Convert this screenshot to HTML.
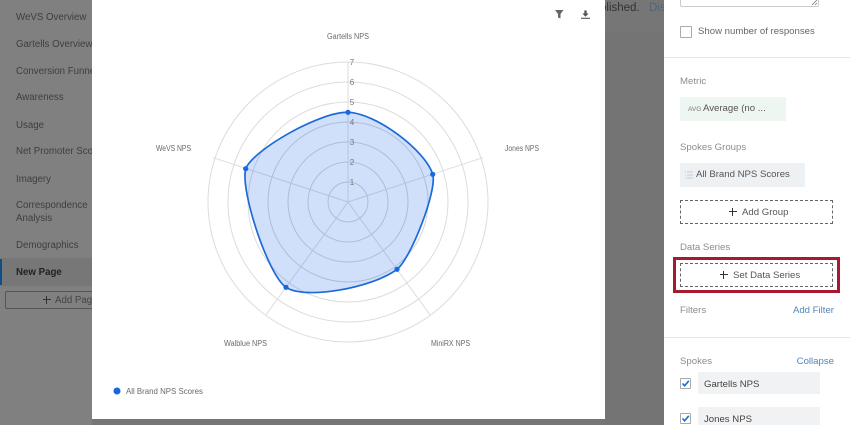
<!DOCTYPE html>
<html>
<head>
<meta charset="utf-8">
<style>
html,body{margin:0;padding:0;width:850px;height:425px;overflow:hidden;background:#767676;font-family:"Liberation Sans",sans-serif}
.a{position:absolute;white-space:nowrap}
#side{position:absolute;left:0;top:0;width:92px;height:425px;background:#808080;overflow:hidden}
#side .a{left:16px;font-size:9.7px;line-height:14px;color:#3e3e3e}
#panel{position:absolute;left:664px;top:0;width:186px;height:425px;background:#fff;overflow:hidden}
.l{position:absolute;white-space:nowrap;font-size:9.6px;line-height:14px;color:#8c8c8c}
.d{position:absolute;white-space:nowrap;font-size:9.6px;line-height:14px;color:#555}
.b{position:absolute;white-space:nowrap;font-size:9.6px;line-height:14px;color:#4f86b8}
.dash{position:absolute;left:16px;width:151px;height:22px;border:1px dashed #666;box-sizing:content-box}
.hr{position:absolute;left:0;width:186px;height:1px;background:#e6e6e6}
.cb{position:absolute;left:16px;width:9px;height:9px;border:1px solid #aaa;border-radius:1px;background:#fff}
.in{position:absolute;left:34px;width:122px;height:22px;background:#f1f2f4}
.p{position:absolute;width:8px;height:8px;background:linear-gradient(#333,#333) center/8px 1.2px no-repeat,linear-gradient(#333,#333) center/1.2px 8px no-repeat}
</style>
</head>
<body>
<div class="a" style="left:600px;top:1px;font-size:11.5px;line-height:14px;color:#333">olished.</div>
<div class="a" style="left:649px;top:1px;font-size:11.5px;line-height:14px;color:#4f6577">Dis</div>
<div style="position:absolute;left:605px;top:31px;width:59px;height:394px;background:#747474"></div>

<div id="side">
<div class="a" style="top:11px">WeVS Overview</div>
<div class="a" style="top:38px">Gartells Overview</div>
<div class="a" style="top:65px">Conversion Funnel</div>
<div class="a" style="top:91px">Awareness</div>
<div class="a" style="top:119px">Usage</div>
<div class="a" style="top:145px">Net Promoter Score</div>
<div class="a" style="top:173px">Imagery</div>
<div class="a" style="top:199px">Correspondence</div>
<div class="a" style="top:212px">Analysis</div>
<div class="a" style="top:239px">Demographics</div>
<div style="position:absolute;left:0;top:258px;width:92px;height:28px;background:#777"></div>
<div style="position:absolute;left:0;top:259px;width:2px;height:26px;background:#0f4f86"></div>
<div class="a" style="top:266px;font-weight:bold;color:#222">New Page</div>
<div style="position:absolute;left:5px;top:291px;width:100px;height:16px;border:1px solid #555;border-radius:2px"></div>
<div class="p" style="left:43px;top:296px"></div>
<div class="a" style="top:294px;left:55px;color:#444">Add Page</div>
</div>

<div style="position:absolute;left:92px;top:0;width:513px;height:419px;background:#fff">
<svg width="513" height="419" viewBox="92 0 513 419" style="position:absolute;left:0;top:0">
<g fill="none" stroke="#dcdcdc" stroke-width="1">
<circle cx="348" cy="202" r="20" stroke="#d4d4d4"/>
<circle cx="348" cy="202" r="40" stroke="#d4d4d4"/>
<circle cx="348" cy="202" r="60" stroke="#d4d4d4"/>
<circle cx="348" cy="202" r="80" stroke="#d4d4d4"/>
<circle cx="348" cy="202" r="100"/>
<circle cx="348" cy="202" r="120"/>
<circle cx="348" cy="202" r="140"/>
<path d="M348 202V62M348 202L482.7 157.7M348 202L430.5 315.5M348 202L265.5 315.5M348 202L213.3 157.7"/>
</g>
<path d="M348 112.3C376 113.1 425.2 150.3 432.7 174.3C437.5 189.7 410.9 258.6 397 269.3C372 288 305 300 286 287.3C268 275 240 190 245.7 168.7C253 150 320 111.5 348 112.3Z" fill="rgba(20,100,235,.2)" stroke="#1c6ad6" stroke-width="1.7"/>
<g fill="#1468e6">
<circle cx="348" cy="112.3" r="2.6"/>
<circle cx="432.7" cy="174.3" r="2.6"/>
<circle cx="397" cy="269.3" r="2.6"/>
<circle cx="286" cy="287.3" r="2.6"/>
<circle cx="245.7" cy="168.7" r="2.6"/>
<circle cx="117" cy="391" r="3.5"/>
</g>
<g font-family="Liberation Sans, sans-serif" font-size="8" fill="#777" text-anchor="middle">
<text x="352" y="65">7</text>
<text x="352" y="85">6</text>
<text x="352" y="105">5</text>
<text x="352" y="125">4</text>
<text x="352" y="145">3</text>
<text x="352" y="165">2</text>
<text x="352" y="185">1</text>
</g>
<g font-family="Liberation Sans, sans-serif" font-size="8" fill="#6a6a6a">
<text x="327" y="39" textLength="42" lengthAdjust="spacingAndGlyphs">Gartells NPS</text>
<text x="505" y="151" textLength="34" lengthAdjust="spacingAndGlyphs">Jones NPS</text>
<text x="156" y="151" textLength="35" lengthAdjust="spacingAndGlyphs">WeVS NPS</text>
<text x="224" y="346" textLength="43" lengthAdjust="spacingAndGlyphs">Walblue NPS</text>
<text x="431" y="346" textLength="39" lengthAdjust="spacingAndGlyphs">MiniRX NPS</text>
<text x="126" y="394" textLength="77" lengthAdjust="spacingAndGlyphs">All Brand NPS Scores</text>
</g>
<path d="M555 10h8.5l-3 4v4.5l-2.5-1v-3.5z" fill="#666"/>
<path d="M584.3 10.5h2.4v3h2l-3.2 3.2-3.2-3.2h2zM581 17.7h9v1.2h-9z" fill="#555"/>
</svg>
</div>

<div id="panel">
<div style="position:absolute;left:16px;top:-10px;width:137px;height:15px;border:1px solid #ccc;border-radius:2px"></div>
<svg width="8" height="8" style="position:absolute;left:147px;top:-1px"><path d="M1 6L6 1M4 6L6 4" stroke="#777" stroke-width=".8"/></svg>
<div class="cb" style="top:26px;width:10px;height:10px"></div>
<div class="d" style="left:34px;top:25px;color:#666">Show number of responses</div>
<div class="hr" style="top:57px"></div>
<div class="l" style="left:16px;top:75px">Metric</div>
<div style="position:absolute;left:16px;top:97px;width:106px;height:24px;background:#eef6f2"></div>
<div class="a" style="left:24px;top:105px;font-size:6.5px;line-height:9px;color:#777">AVG</div>
<div class="d" style="left:39px;top:102px">Average (no ...</div>
<div class="l" style="left:16px;top:141px">Spokes Groups</div>
<div style="position:absolute;left:16px;top:163px;width:125px;height:24px;background:#eef1f3"></div>
<svg width="8" height="8" style="position:absolute;left:21px;top:171px"><path d="M0 1h1M2 1h6M0 4h1M2 4h6M0 7h1M2 7h6" stroke="#c6ccd2" stroke-width="1"/></svg>
<div class="d" style="left:32px;top:168px">All Brand NPS Scores</div>
<div class="dash" style="top:200px"></div>
<div class="p" style="left:65px;top:208px"></div>
<div class="d" style="left:78px;top:206px">Add Group</div>
<div class="l" style="left:16px;top:241px">Data Series</div>
<div style="position:absolute;left:9px;top:257px;width:161px;height:30px;border:3px solid #a6192e"></div>
<div class="dash" style="top:263px"></div>
<div class="p" style="left:56px;top:271px"></div>
<div class="d" style="left:69px;top:269px">Set Data Series</div>
<div class="l" style="left:16px;top:304px">Filters</div>
<div class="b" style="right:16px;top:304px">Add Filter</div>
<div class="hr" style="top:337px"></div>
<div class="l" style="left:16px;top:355px">Spokes</div>
<div class="b" style="right:16px;top:355px">Collapse</div>
<div class="cb" style="top:378px"></div>
<svg width="11" height="11" style="position:absolute;left:16px;top:378px"><path d="M2.5 5.5L4.6 7.8 8.8 2.8" fill="none" stroke="#1c6ad6" stroke-width="1.6"/></svg>
<div class="in" style="top:372px"></div>
<div class="d" style="left:40px;top:378px;color:#444">Gartells NPS</div>
<div class="cb" style="top:413px"></div>
<svg width="11" height="11" style="position:absolute;left:16px;top:413px"><path d="M2.5 5.5L4.6 7.8 8.8 2.8" fill="none" stroke="#1c6ad6" stroke-width="1.6"/></svg>
<div class="in" style="top:407px"></div>
<div class="d" style="left:40px;top:413px;color:#444">Jones NPS</div>
</div>
</body>
</html>
